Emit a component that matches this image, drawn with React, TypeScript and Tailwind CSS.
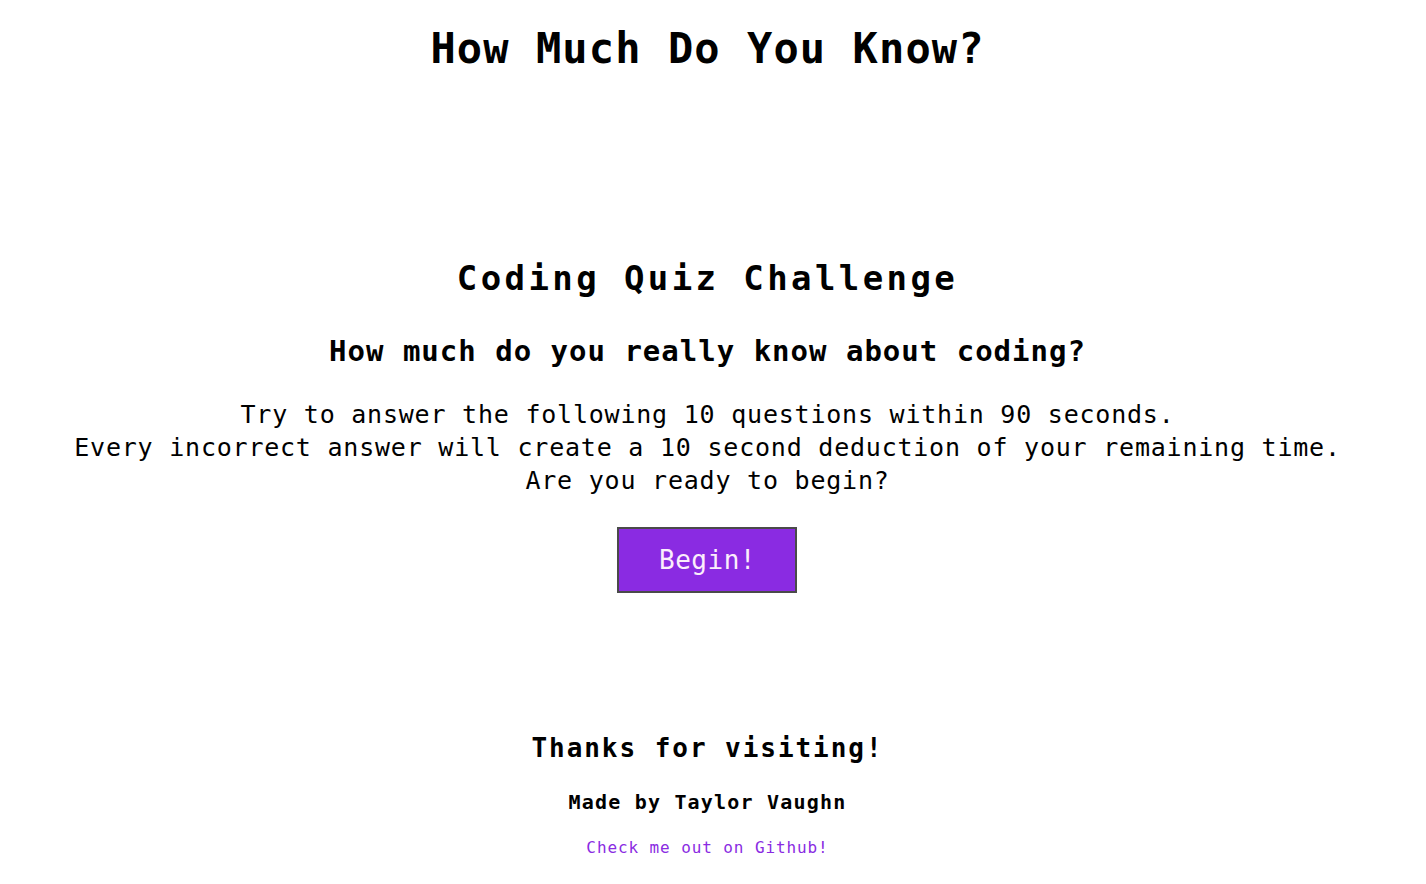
import React from 'react';

const App: React.FC = () => {
  return (
    <div className="min-h-screen w-full bg-white text-black font-['DejaVu_Sans_Mono',monospace] flex flex-col items-center text-center pr-[11px]">
      {/* Header */}
      <h1 className="pt-[24px] text-[42px] leading-[50px] font-bold tracking-[1.1px]">How Much Do You Know?</h1>

      {/* Intro card */}
      <section className="mt-[184px] flex flex-col items-center">
        <h2 className="text-[34px] leading-[40px] font-bold tracking-[3.4px]">Coding Quiz Challenge</h2>
        <h3 className="mt-[35px] text-[29px] leading-[36px] font-bold tracking-[1px]">How much do you really know about coding?</h3>
        <p className="mt-[29px] text-[25px] leading-[33px] tracking-[0.78px]">
          Try to answer the following 10 questions within 90 seconds.
          <br />
          Every incorrect answer will create a 10 second deduction of your remaining time.
          <br />
          Are you ready to begin?
        </p>
        <button className="mt-[30px] w-[180px] h-[66px] bg-[#8a2be2] border-2 border-[#4a4a4a] text-[#fbeefb] text-[26px] tracking-[0.5px] flex items-center justify-center">
          Begin!
        </button>
      </section>

      {/* Footer */}
      <footer className="mt-[137px] flex flex-col items-center">
        <h3 className="text-[26px] leading-[36px] font-bold tracking-[1.95px]">Thanks for visiting!</h3>
        <h4 className="mt-[24px] text-[20px] leading-[24px] font-bold tracking-[1.2px]">Made by Taylor Vaughn</h4>
        <a href="#" className="mt-[24px] text-[16px] leading-[20px] tracking-[0.9px] text-[#8a2be2]">Check me out on Github!</a>
      </footer>
    </div>
  );
};

export default App;
